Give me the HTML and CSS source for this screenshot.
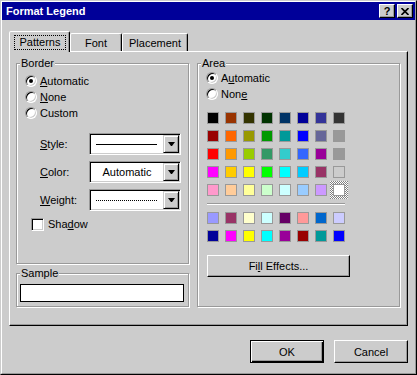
FILE: index.html
```html
<!DOCTYPE html>
<html lang="en">
<head>
    <meta charset="UTF-8">
    <title>Format Legend</title>
    <link rel="stylesheet" href="styles.css">
</head>
<body>
<div class="window">
  <div class="frame">
    <div class="titlebar">
      <span class="title">Format Legend</span>
      <div class="title-btns">
        <span class="tbtn">?</span>
        <span class="tbtn"><svg width="8" height="7" viewBox="0 0 8 7"><path d="M0.5 0 L7.5 7 M7.5 0 L0.5 7" stroke="#000" stroke-width="1.6"/></svg></span>
      </div>
    </div>

    <div class="tabs">
      <div class="tab active"><span class="focus">Patterns</span></div>
      <div class="tab tab-font">Font</div>
      <div class="tab tab-placement">Placement</div>
    </div>

    <div class="panel">
      <div class="left-col">
        <fieldset class="group border-group">
          <legend>Border</legend>
          <div class="border-body">
            <div class="radio-row"><span class="radio checked"></span><span><u>A</u>utomatic</span></div>
            <div class="radio-row"><span class="radio"></span><span><u>N</u>one</span></div>
            <div class="radio-row"><span class="radio"></span><span>Custom</span></div>

            <div class="field-row first">
              <span class="field-label"><u>S</u>tyle:</span>
              <div class="combo">
                <div class="combo-value"><span class="line-solid"></span></div>
                <span class="combo-btn"></span>
              </div>
            </div>
            <div class="field-row">
              <span class="field-label"><u>C</u>olor:</span>
              <div class="combo">
                <div class="combo-value centered">Automatic</div>
                <span class="combo-btn"></span>
              </div>
            </div>
            <div class="field-row">
              <span class="field-label"><u>W</u>eight:</span>
              <div class="combo">
                <div class="combo-value"><span class="line-dotted"></span></div>
                <span class="combo-btn"></span>
              </div>
            </div>

            <div class="check-row"><span class="checkbox"></span><span>Sha<u>d</u>ow</span></div>
          </div>
        </fieldset>

        <fieldset class="group sample-group">
          <legend>Sample</legend>
          <div class="sample-box"></div>
        </fieldset>
      </div>

      <fieldset class="group area-group">
        <legend>Area</legend>
        <div class="area-body">
          <div class="radio-row"><span class="radio checked"></span><span>A<u>u</u>tomatic</span></div>
          <div class="radio-row"><span class="radio"></span><span>Non<u>e</u></span></div>

          <div class="swatches">
            <span class="swatch" style="background:#000000"></span>
            <span class="swatch" style="background:#993300"></span>
            <span class="swatch" style="background:#333300"></span>
            <span class="swatch" style="background:#003300"></span>
            <span class="swatch" style="background:#003366"></span>
            <span class="swatch" style="background:#000099"></span>
            <span class="swatch" style="background:#333399"></span>
            <span class="swatch" style="background:#333333"></span>

            <span class="swatch" style="background:#990000"></span>
            <span class="swatch" style="background:#ff6600"></span>
            <span class="swatch" style="background:#999900"></span>
            <span class="swatch" style="background:#009900"></span>
            <span class="swatch" style="background:#009999"></span>
            <span class="swatch" style="background:#0000ff"></span>
            <span class="swatch" style="background:#666699"></span>
            <span class="swatch" style="background:#999999"></span>

            <span class="swatch" style="background:#ff0000"></span>
            <span class="swatch" style="background:#ff9900"></span>
            <span class="swatch" style="background:#99cc00"></span>
            <span class="swatch" style="background:#339966"></span>
            <span class="swatch" style="background:#33cccc"></span>
            <span class="swatch" style="background:#3366ff"></span>
            <span class="swatch" style="background:#990099"></span>
            <span class="swatch" style="background:#999999"></span>

            <span class="swatch" style="background:#ff00ff"></span>
            <span class="swatch" style="background:#ffcc00"></span>
            <span class="swatch" style="background:#ffff00"></span>
            <span class="swatch" style="background:#00ff00"></span>
            <span class="swatch" style="background:#00ffff"></span>
            <span class="swatch" style="background:#00ccff"></span>
            <span class="swatch" style="background:#993366"></span>
            <span class="swatch" style="background:#cccccc"></span>

            <span class="swatch" style="background:#ff99cc"></span>
            <span class="swatch" style="background:#ffcc99"></span>
            <span class="swatch" style="background:#ffff99"></span>
            <span class="swatch" style="background:#ccffcc"></span>
            <span class="swatch" style="background:#ccffff"></span>
            <span class="swatch" style="background:#99ccff"></span>
            <span class="swatch" style="background:#cc99ff"></span>
            <span class="swatch selected"></span>
          </div>

          <div class="sep"></div>

          <div class="swatches">
            <span class="swatch" style="background:#9999ff"></span>
            <span class="swatch" style="background:#993366"></span>
            <span class="swatch" style="background:#ffffcc"></span>
            <span class="swatch" style="background:#ccffff"></span>
            <span class="swatch" style="background:#660066"></span>
            <span class="swatch" style="background:#ff9999"></span>
            <span class="swatch" style="background:#0066cc"></span>
            <span class="swatch" style="background:#ccccff"></span>

            <span class="swatch" style="background:#000099"></span>
            <span class="swatch" style="background:#ff00ff"></span>
            <span class="swatch" style="background:#ffff00"></span>
            <span class="swatch" style="background:#00ffff"></span>
            <span class="swatch" style="background:#990099"></span>
            <span class="swatch" style="background:#990000"></span>
            <span class="swatch" style="background:#009999"></span>
            <span class="swatch" style="background:#0000ff"></span>
          </div>

          <button class="btn fill-btn">Fi<u>l</u>l Effects...</button>
        </div>
      </fieldset>
    </div>

    <div class="actions">
      <button class="btn default">OK</button>
      <button class="btn">Cancel</button>
    </div>
  </div>
</div>
</body>
</html>
```

FILE: styles.css
```css
* {
    box-sizing: border-box;
}
body {
    margin: 0;
    background: #cccccc;
    font-family: "Liberation Sans", Arial, sans-serif;
    font-size: 11px;
    color: #000;
}
u {
    text-decoration: underline;
}

/* window frame */
.window {
    width: 417px;
    height: 375px;
    border: 1px solid;
    border-color: #cccccc #000 #000 #cccccc;
}
.frame {
    height: 100%;
    border: 1px solid;
    border-color: #fff #999 #999 #fff;
    display: flex;
    flex-direction: column;
}
.titlebar {
    height: 18px;
    background: #000099;
    display: flex;
    align-items: center;
    justify-content: space-between;
    padding: 0 2px 0 4px;
}
.title {
    color: #fff;
    font-weight: bold;
    font-size: 11px;
}
.title-btns {
    display: flex;
    gap: 2px;
}
.tbtn {
    width: 16px;
    height: 14px;
    background: #cccccc;
    border: 1px solid;
    border-color: #fff #000 #000 #fff;
    box-shadow: inset -1px -1px #999;
    display: flex;
    align-items: center;
    justify-content: center;
    font-weight: bold;
    font-size: 11px;
    line-height: 1;
}

/* tabs */
.tabs {
    display: flex;
    align-items: flex-end;
    height: 20px;
    margin: 11px 0 0 7px;
    position: relative;
    z-index: 1;
}
.tab {
    height: 18px;
    background: #cccccc;
    border: 1px solid;
    border-bottom: none;
    border-color: #fff #000 transparent #fff;
    box-shadow: inset -1px 0 #999;
    border-radius: 2px 2px 0 0;
    display: flex;
    align-items: center;
    justify-content: center;
}
.tab.active {
    width: 61px;
    height: 21px;
    margin-bottom: -1px;
    justify-content: flex-start;
    padding-left: 4px;
}
.tab-font {
    width: 52px;
}
.tab-placement {
    width: 66px;
}
.focus {
    width: 52px;
    height: 15px;
    outline: 1px dotted #000;
    outline-offset: -1px;
    display: flex;
    align-items: center;
    justify-content: center;
}

/* panel */
.panel {
    margin: 0 7px;
    height: 275px;
    border: 1px solid;
    border-color: #fff #000 #000 #fff;
    box-shadow: inset -1px -1px #999;
    padding: 5px 0 0 6px;
    display: flex;
    gap: 8px;
}
.left-col {
    width: 173px;
    display: flex;
    flex-direction: column;
    gap: 3px;
}
.group {
    margin: 0;
    padding: 0;
    min-width: 0;
    border: 1px solid #999;
    box-shadow: inset 1px 1px #fff, 1px 1px #fff;
}
.group legend {
    margin-left: 3px;
    padding: 0 1px;
    line-height: 13px;
    background: #cccccc;
}
.border-group {
    height: 207px;
}
.sample-group {
    height: 40px;
}
.area-group {
    width: 203px;
    height: 250px;
}

.border-body {
    padding: 3px 0 0 8px;
}
.area-body {
    padding: 0 0 0 8px;
}
.radio-row {
    display: flex;
    align-items: center;
    gap: 3px;
    height: 16px;
}
.radio {
    flex: none;
    position: relative;
    width: 12px;
    height: 12px;
    border-radius: 50%;
    background: #fff;
    border: 1px solid;
    border-color: #999 #fff #fff #999;
    box-shadow: inset 1px 1px #000, inset -1px -1px #cccccc;
}
.radio.checked::after {
    content: "";
    position: absolute;
    left: 3px;
    top: 3px;
    width: 4px;
    height: 4px;
    border-radius: 50%;
    background: #000;
}

.field-row {
    display: flex;
    align-items: center;
    height: 22px;
    margin-top: 6px;
    padding-left: 15px;
}
.field-row.first {
    margin-top: 12px;
}
.field-label {
    width: 49px;
}
.combo {
    width: 92px;
    height: 22px;
    display: flex;
    background: #fff;
    border: 1px solid;
    border-color: #999 #fff #fff #999;
    box-shadow: inset 1px 1px #000, inset -1px -1px #cccccc;
    padding: 1px;
}
.combo-value {
    flex: 1;
    display: flex;
    align-items: center;
    padding-left: 5px;
}
.combo-value.centered {
    justify-content: center;
    padding-left: 0;
}
.line-solid {
    width: 61px;
    height: 1px;
    background: #000;
}
.line-dotted {
    width: 62px;
    height: 1px;
    background: repeating-linear-gradient(90deg, #000 0 1px, transparent 1px 2px);
}
.combo-btn {
    width: 16px;
    background: #cccccc;
    border: 1px solid;
    border-color: #cccccc #000 #000 #cccccc;
    box-shadow: inset 1px 1px #fff, inset -1px -1px #999;
    display: flex;
    align-items: center;
    justify-content: center;
}
.combo-btn::after {
    content: "";
    width: 1px;
    border-left: 3px solid transparent;
    border-right: 3px solid transparent;
    border-top: 4px solid #000;
}

.check-row {
    display: flex;
    align-items: center;
    gap: 4px;
    height: 16px;
    margin-top: 5px;
    padding-left: 6px;
}
.checkbox {
    width: 13px;
    height: 13px;
    background: #fff;
    border: 1px solid;
    border-color: #999 #fff #fff #999;
    box-shadow: inset 1px 1px #000, inset -1px -1px #cccccc;
}

.sample-box {
    margin: 4px 0 0 3px;
    width: 164px;
    height: 18px;
    background: #fff;
    border: 1px solid #000;
}

/* colour palette */
.swatches {
    display: grid;
    grid-template-columns: repeat(8, 12px);
    grid-auto-rows: 12px;
    gap: 6px;
    margin-left: 1px;
}
.area-body .radio-row + .swatches {
    margin-top: 10px;
}
.swatch {
    width: 12px;
    height: 12px;
    border: 1px solid #999;
}
.swatch.selected {
    position: relative;
    border: none;
}
.swatch.selected::before {
    content: "";
    position: absolute;
    inset: -3px;
    background: repeating-conic-gradient(#808080 0 25%, #fff 0 50%) 0 0 / 2px 2px;
}
.swatch.selected::after {
    content: "";
    position: absolute;
    inset: 0;
    border: 1px solid #999;
    background: #fff;
}
.sep {
    width: 138px;
    height: 2px;
    margin: 7px 0 7px 1px;
    border-top: 1px solid #999;
    border-bottom: 1px solid #fff;
}

/* buttons */
.btn {
    font: inherit;
    color: #000;
    background: #cccccc;
    border: 1px solid;
    border-color: #fff #000 #000 #fff;
    box-shadow: inset -1px -1px #999;
    padding: 0;
    width: 74px;
    height: 23px;
}
.btn.default {
    border-color: #000;
    box-shadow: inset 1px 1px #fff, inset -1px -1px #000, inset -2px -2px #999;
}
.fill-btn {
    display: block;
    width: 143px;
    height: 22px;
    margin: 13px 0 0 1px;
}
.actions {
    display: flex;
    justify-content: flex-end;
    gap: 10px;
    margin: 14px 7px 0 0;
}
```
